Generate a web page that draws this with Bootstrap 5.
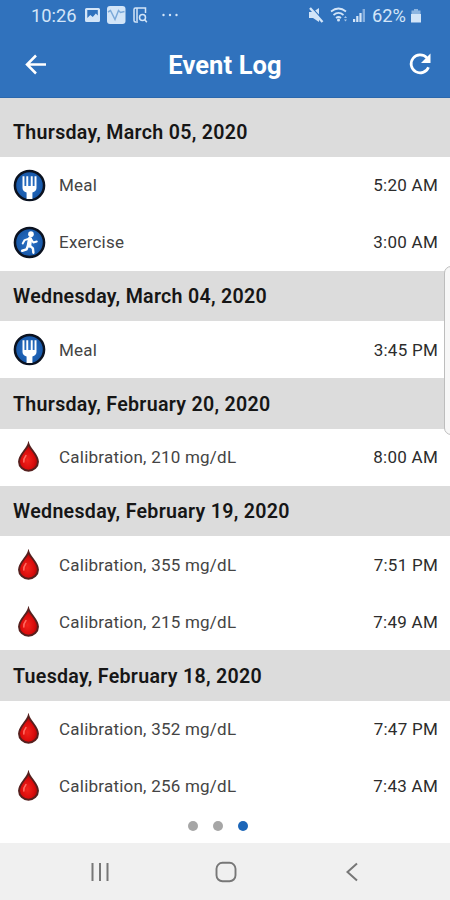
<!DOCTYPE html>
<html lang="en">
<head>
<meta charset="utf-8">
<meta name="viewport" content="width=device-width, initial-scale=1">
<title>Event Log</title>
<link href="https://cdn.jsdelivr.net/npm/bootstrap@5.3.0/dist/css/bootstrap.min.css" rel="stylesheet">
<style>
body{font-family:Roboto,sans-serif;color:#161616;width:450px;height:900px;overflow:hidden}
svg{display:block;flex:none}
.app-head{background:#3072bd;height:98px;border-bottom:1px solid #2b68ad}
.status{height:32px;padding:0 28px 0 31px;color:#d3e5f8;font-size:18.3px;line-height:32px}
.title-bar{height:65px;padding:0 18px 0 24px}
.title-bar h1{font-size:25.5px;font-weight:700;letter-spacing:.1px;margin-right:6px;padding-top:2px}
.day{background:#dcdcdc;height:50.5px;padding:2px 13px 0;font-size:19.6px;font-weight:600;letter-spacing:.3px}
.day-first{height:58.5px;padding-top:10px}
.event{height:57px;padding:2px 12px 0 13px;font-size:17px;color:#444;letter-spacing:.23px}
.event .icon{width:46px;padding-bottom:2px}
.event time{color:#2c2c2c;letter-spacing:.25px}
.pager{height:28px;padding-left:188px;gap:15px;padding-bottom:5px}
.pager i{width:10px;height:10px;background:#a6a6a6}
.pager .on{background:#1c66b8}
.sysnav{background:#f0f0f0;height:58px;padding:0 87px 0 89px}
.edge{position:absolute;left:444px;top:266px;width:20px;height:169px;border:1px solid #bdbdbd;border-radius:7px;background:#f7f7f7}
</style>
</head>
<body class="bg-white position-relative d-flex flex-column">
<svg width="0" height="0" class="position-absolute">
<defs>
<radialGradient id="blue"><stop offset="0" stop-color="#2b72c8"/><stop offset="1" stop-color="#1656a6"/></radialGradient>
<radialGradient id="red" cx=".45" cy=".6" r=".6"><stop offset="0" stop-color="#f3241c"/><stop offset=".6" stop-color="#d90b0b"/><stop offset="1" stop-color="#8e0808"/></radialGradient>
<symbol id="meal" viewBox="0 0 34 34"><circle cx="17" cy="17" r="15" fill="url(#blue)" stroke="#0b1220" stroke-width="2.600"/><path d="M9.800 7.500h2v10h1.900v-10h2v10h2.600v-10h2v10h1.900v-10h2v12.200q0 3.500-4.200 4.600V31h-6v-6.700q-4.200-1.100-4.200-4.600z" fill="#fff"/></symbol>
<symbol id="run" viewBox="0 0 34 34"><circle cx="17" cy="17" r="15" fill="url(#blue)" stroke="#0b1220" stroke-width="2.600"/><circle cx="18.500" cy="8.400" r="2.900" fill="#fff"/><g fill="none" stroke="#fff" stroke-linejoin="round" stroke-linecap="round"><path d="M17.500 13.500l-1 6.500" stroke-width="4.600"/><path d="M16.500 13l-4.500 1.500-2 3.500M18.500 13.500l2.500 3.500 3.500-1" stroke-width="2"/><path d="M17 20l3.500 3 .5 4.500M15.500 20l-1.500 4-4.500 1.500" stroke-width="2.500"/></g></symbol>
<symbol id="drop" viewBox="0 0 24 32"><path d="M12 3C10.500 8 2.500 14 2.500 20.700a9.500 9 0 0 0 19 0C21.500 14 13.500 8 12 3z" fill="url(#red)" stroke="#56201e" stroke-width="1.900"/><path d="M9.500 14.500Q6.800 18 7.300 21" fill="none" stroke="#ff6b60" stroke-width="1.500" stroke-linecap="round"/></symbol>
</defs>
</svg>
<header class="app-head flex-shrink-0">
<div class="status d-flex align-items-center">
<span>10:26</span>
<svg width="96" height="20" viewBox="86 6 96 20" class="ms-2"><path fill="#d3e5f8" fill-rule="evenodd" d="M87.500 8h12q1.500 0 1.500 1.500v11q0 1.500-1.500 1.500h-12q-1.500 0-1.500-1.500v-11q0-1.500 1.500-1.500zm.8 2v8l3-3 2.500 2 3-3.500 2 2V10z"/><rect x="108" y="6" width="18.500" height="18" rx="3" fill="#d3e5f8"/><path d="M109 12l2.500-1.500 4.500 9 3.500-9 2 2 4-1" fill="none" stroke="#7ba9d9" stroke-width="1.500"/><g fill="none" stroke="#d3e5f8" stroke-width="1.500"><path d="M139 22h-2.500q-1.500 0-1.500-1.500v-11q0-1.500 1.500-1.500h10v5M138 8v13"/><circle cx="143.500" cy="17.500" r="3"/><path d="M145.800 19.800l2 2.500"/></g><g fill="#d3e5f8"><circle cx="164.500" cy="15" r="1.200"/><circle cx="171" cy="15" r="1.200"/><circle cx="177.500" cy="15" r="1.200"/></g></svg>
<svg width="60" height="20" viewBox="307 6 60 20" class="ms-auto"><path d="M308 12h4l6-4v14l-6-4h-4z" fill="#d3e5f8"/><path d="M311 8l12 13" stroke="#3072bd" stroke-width="1.200"/><path d="M309 8l12.500 14" stroke="#d3e5f8" stroke-width="2.400"/><g fill="none" stroke="#d3e5f8" stroke-width="1.700"><path d="M330 11.500q7.500-6 15 0M332.500 15q5-4.200 10 0M335 18q2.500-2 5 0"/></g><circle cx="337.500" cy="20" r="1.500" fill="#d3e5f8"/><path d="M343 18l1.500-2 1.500 2zM343 19.500h3l-1.500 2z" fill="#a8c8ea"/><path d="M352 22v-3h2.200v3zM355.200 22v-6h2.200v6zM358.400 22v-9h2.200v9z" fill="#d3e5f8"/><path d="M361.600 22V9h2.400v13z" fill="#86afde"/></svg>
<span class="ms-1">62%</span>
<svg width="12" height="16" viewBox="0 0 12 16" class="ms-1"><path d="M4 1h4v1.500h2.500V6h-9V2.500H4z" fill="#8db5e1"/><path d="M1 6h10v8.500H1z" fill="#d3e5f8"/></svg>
</div>
<div class="title-bar d-flex align-items-center justify-content-between">
<svg width="24" height="24" viewBox="0 0 24 24" fill="none" stroke="#fff" stroke-width="2.500"><path d="M22 11.500H3.500M12 2.500l-9 9 9 9"/></svg>
<h1 class="text-white mb-0">Event Log</h1>
<svg width="24" height="24" viewBox="0 0 24 24"><path d="M20.500 14.200A9 9 0 1 1 18.700 4.700L21 7" fill="none" stroke="#fff" stroke-width="2.700"/><path d="M22.500 .500V10H13z" fill="#fff"/></svg>
</div>
</header>
<main class="flex-shrink-0">
<div class="day day-first d-flex align-items-center"><span>Thursday, March 05, 2020</span></div>
<div class="event d-flex align-items-center"><span class="icon"><svg width="33" height="33"><use href="#meal"/></svg></span><span>Meal</span><time class="ms-auto">5:20 AM</time></div>
<div class="event d-flex align-items-center"><span class="icon"><svg width="33" height="33"><use href="#run"/></svg></span><span>Exercise</span><time class="ms-auto">3:00 AM</time></div>
<div class="day d-flex align-items-center"><span>Wednesday, March 04, 2020</span></div>
<div class="event d-flex align-items-center"><span class="icon"><svg width="33" height="33"><use href="#meal"/></svg></span><span>Meal</span><time class="ms-auto">3:45 PM</time></div>
<div class="day d-flex align-items-center"><span>Thursday, February 20, 2020</span></div>
<div class="event d-flex align-items-center"><span class="icon"><svg width="31" height="32"><use href="#drop"/></svg></span><span>Calibration, 210 mg/dL</span><time class="ms-auto">8:00 AM</time></div>
<div class="day d-flex align-items-center"><span>Wednesday, February 19, 2020</span></div>
<div class="event d-flex align-items-center"><span class="icon"><svg width="31" height="32"><use href="#drop"/></svg></span><span>Calibration, 355 mg/dL</span><time class="ms-auto">7:51 PM</time></div>
<div class="event d-flex align-items-center"><span class="icon"><svg width="31" height="32"><use href="#drop"/></svg></span><span>Calibration, 215 mg/dL</span><time class="ms-auto">7:49 AM</time></div>
<div class="day d-flex align-items-center"><span>Tuesday, February 18, 2020</span></div>
<div class="event d-flex align-items-center"><span class="icon"><svg width="31" height="32"><use href="#drop"/></svg></span><span>Calibration, 352 mg/dL</span><time class="ms-auto">7:47 PM</time></div>
<div class="event d-flex align-items-center"><span class="icon"><svg width="31" height="32"><use href="#drop"/></svg></span><span>Calibration, 256 mg/dL</span><time class="ms-auto">7:43 AM</time></div>
</main>
<div class="pager d-flex align-items-center flex-shrink-0"><i class="rounded-circle"></i><i class="rounded-circle"></i><i class="rounded-circle on"></i></div>
<nav class="sysnav d-flex align-items-center justify-content-between mt-auto flex-shrink-0">
<svg width="22" height="22" viewBox="0 0 22 22" stroke="#777" stroke-width="2"><path d="M3.500 2v18M11 2v18M18.500 2v18"/></svg>
<svg width="22" height="22" viewBox="0 0 22 22"><rect x="1.500" y="1.800" width="19" height="18.500" rx="6" fill="none" stroke="#777" stroke-width="1.900"/></svg>
<svg width="22" height="22" viewBox="0 0 22 22" fill="none" stroke="#777" stroke-width="2"><path d="M16 2.500L6.500 11l9.500 8.500"/></svg>
</nav>
<div class="edge"></div>
<script src="https://cdn.jsdelivr.net/npm/bootstrap@5.3.0/dist/js/bootstrap.bundle.min.js"></script>
</body>
</html>
